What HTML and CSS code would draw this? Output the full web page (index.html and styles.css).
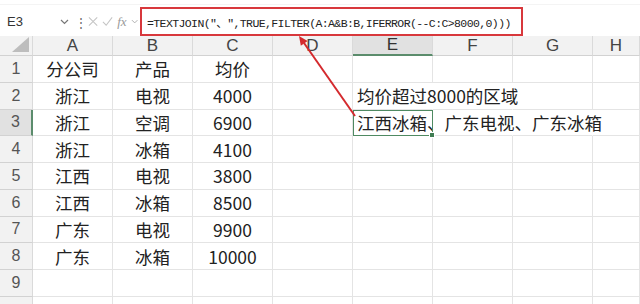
FILE: index.html
```html
<!DOCTYPE html>
<html lang="zh-CN">
<head>
    <meta charset="UTF-8">
    <title>TEXTJOIN FILTER</title>
    <link rel="stylesheet" href="styles.css">
</head>
<body>
    <div class="ribbon"></div>

    <div class="formula-bar">
        <div class="name-box">
            <span>E3</span>
            <svg class="chev" width="9" height="6" viewBox="0 0 9 6"><path d="M1 1 L4.5 4.5 L8 1" fill="none" stroke="#777" stroke-width="1.2"/></svg>
        </div>
        <div class="dots">⋮</div>
        <div class="fx-tools">
            <svg width="11" height="11" viewBox="0 0 11 11"><path d="M1 1 L10 10 M10 1 L1 10" stroke="#c4c4c4" stroke-width="1.1"/></svg>
            <svg width="12" height="11" viewBox="0 0 12 11"><path d="M1 6 L4.5 9.5 L11 1" fill="none" stroke="#c4c4c4" stroke-width="1.1"/></svg>
            <span class="fx">fx</span>
            <svg width="8" height="5" viewBox="0 0 8 5"><path d="M1 1 L4 4 L7 1" fill="none" stroke="#aaa" stroke-width="1"/></svg>
        </div>
        <div class="formula">=TEXTJOIN("、",TRUE,FILTER(A:A&amp;B:B,IFERROR(--C:C&gt;8000,0)))</div>
    </div>

    <div class="sheet">
        <div class="hd corner"><span class="tri"></span></div>
        <div class="hd col">A</div>
        <div class="hd col">B</div>
        <div class="hd col">C</div>
        <div class="hd col">D</div>
        <div class="hd col sel-col">E</div>
        <div class="hd col">F</div>
        <div class="hd col">G</div>
        <div class="hd col">H</div>

        <div class="hd row">1</div>
        <div class="c">分公司</div><div class="c">产品</div><div class="c">均价</div>
        <div class="c"></div><div class="c"></div><div class="c"></div><div class="c"></div><div class="c"></div>

        <div class="hd row">2</div>
        <div class="c">浙江</div><div class="c">电视</div><div class="c">4000</div>
        <div class="c"></div><div class="c left no-r">均价超过8000的区域</div><div class="c no-r"></div><div class="c"></div><div class="c"></div>

        <div class="hd row sel-row">3</div>
        <div class="c">浙江</div><div class="c">空调</div><div class="c">6900</div>
        <div class="c"></div><div class="c left active">江西冰箱、广东电视、广东冰箱</div><div class="c no-r"></div><div class="c no-r"></div><div class="c"></div>

        <div class="hd row">4</div>
        <div class="c">浙江</div><div class="c">冰箱</div><div class="c">4100</div>
        <div class="c"></div><div class="c"></div><div class="c"></div><div class="c"></div><div class="c"></div>

        <div class="hd row">5</div>
        <div class="c">江西</div><div class="c">电视</div><div class="c">3800</div>
        <div class="c"></div><div class="c"></div><div class="c"></div><div class="c"></div><div class="c"></div>

        <div class="hd row">6</div>
        <div class="c">江西</div><div class="c">冰箱</div><div class="c">8500</div>
        <div class="c"></div><div class="c"></div><div class="c"></div><div class="c"></div><div class="c"></div>

        <div class="hd row">7</div>
        <div class="c">广东</div><div class="c">电视</div><div class="c">9900</div>
        <div class="c"></div><div class="c"></div><div class="c"></div><div class="c"></div><div class="c"></div>

        <div class="hd row">8</div>
        <div class="c">广东</div><div class="c">冰箱</div><div class="c">10000</div>
        <div class="c"></div><div class="c"></div><div class="c"></div><div class="c"></div><div class="c"></div>

        <div class="hd row">9</div>
        <div class="c"></div><div class="c"></div><div class="c"></div>
        <div class="c"></div><div class="c"></div><div class="c"></div><div class="c"></div><div class="c"></div>

        <div class="hd row last"></div>
        <div class="c"></div><div class="c"></div><div class="c"></div>
        <div class="c"></div><div class="c"></div><div class="c"></div><div class="c"></div><div class="c"></div>
    </div>

    <!-- annotation arrow pointing from E3 to the formula -->
    <svg class="arrow" width="640" height="304" viewBox="0 0 640 304">
        <line x1="355" y1="116" x2="304" y2="43" stroke="#d42a2e" stroke-width="2"/>
        <polygon points="299,36 307.6,41 300.8,45.8" fill="#d42a2e"/>
    </svg>
</body>
</html>
```

FILE: styles.css
```css
body {
    margin: 0;
    width: 640px;
    height: 304px;
    overflow: hidden;
    position: relative;
    background: #fff;
    font-family: "Noto Sans CJK SC", "Noto Sans", sans-serif;
    color: #222;
}

.ribbon {
    height: 5px;
    background: #fff;
    border-bottom: 1px solid #f4f4f4;
    box-sizing: border-box;
}

/* formula bar */
.formula-bar {
    display: flex;
    align-items: center;
    height: 31px;
    background: #fff;
}

.name-box {
    width: 75px;
    height: 26px;
    box-sizing: border-box;
    display: flex;
    align-items: center;
    justify-content: space-between;
    padding: 0 6px 0 7px;
    font-family: "Liberation Sans", sans-serif;
    font-size: 13px;
    color: #333;
    margin-top: 2px;
}

.dots {
    width: 9px;
    text-align: center;
    font-size: 12px;
    color: #666;
    margin-top: 2px;
}

.fx-tools {
    width: 54px;
    height: 26px;
    box-sizing: border-box;
    display: flex;
    align-items: center;
    gap: 4px;
    padding-left: 4px;
    margin-top: 2px;
}

.fx {
    font-family: "Liberation Serif", serif;
    font-style: italic;
    font-size: 13px;
    color: #999;
}

.formula {
    margin-left: 2px;
    margin-top: 2px;
    width: 383px;
    height: 29px;
    box-sizing: border-box;
    border: 2px solid #d8383c;
    padding: 5px 0 0 5px;
    font-family: "Liberation Mono", "Noto Sans CJK SC", monospace;
    font-size: 11.5px;
    letter-spacing: -0.6px;
    color: #222;
    white-space: nowrap;
}

/* worksheet grid */
.sheet {
    display: grid;
    grid-template-columns: 33px repeat(7, 80px) 47px;
    grid-template-rows: 20px repeat(9, 26.75px) 7px;
}

.hd {
    background: #f2f2f2;
    box-sizing: border-box;
    border-right: 1px solid #dadada;
    border-bottom: 1px solid #d2d2d2;
    display: flex;
    align-items: center;
    justify-content: center;
    color: #444;
}

.col {
    font-family: "Liberation Sans", sans-serif;
    font-size: 17px;
}

.row {
    font-family: "Liberation Sans", sans-serif;
    font-size: 16px;
    color: #555;
}

.corner {
    position: relative;
}

.tri {
    position: absolute;
    right: 3px;
    bottom: 3px;
    width: 0;
    height: 0;
    border-left: 17px solid transparent;
    border-bottom: 15px solid #bdbdbd;
}

.sel-col {
    background: #e1e1e1;
    border-bottom: 2px solid #5b8c6c;
    color: #333;
}

.sel-row {
    background: #e1e1e1;
    border-right: 2px solid #5b8c6c;
}

.c {
    box-sizing: border-box;
    border-right: 1px solid #e4e4e4;
    border-bottom: 1px solid #e4e4e4;
    display: flex;
    align-items: center;
    justify-content: center;
    font-size: 17.5px;
    white-space: nowrap;
}

.last,
.last ~ .c {
    border-bottom: none;
}

.left {
    justify-content: flex-start;
    padding-left: 4px;
}

.no-r {
    border-right-color: transparent;
}

.active {
    position: relative;
    border-right-color: transparent;
    outline: 1.5px solid #4f8a62;
    outline-offset: -1px;
}

.active::after {
    content: "";
    position: absolute;
    right: -3px;
    bottom: -3px;
    width: 4px;
    height: 4px;
    background: #3f7d52;
    border: 1px solid #fff;
}

.arrow {
    position: absolute;
    left: 0;
    top: 0;
    pointer-events: none;
}
```
